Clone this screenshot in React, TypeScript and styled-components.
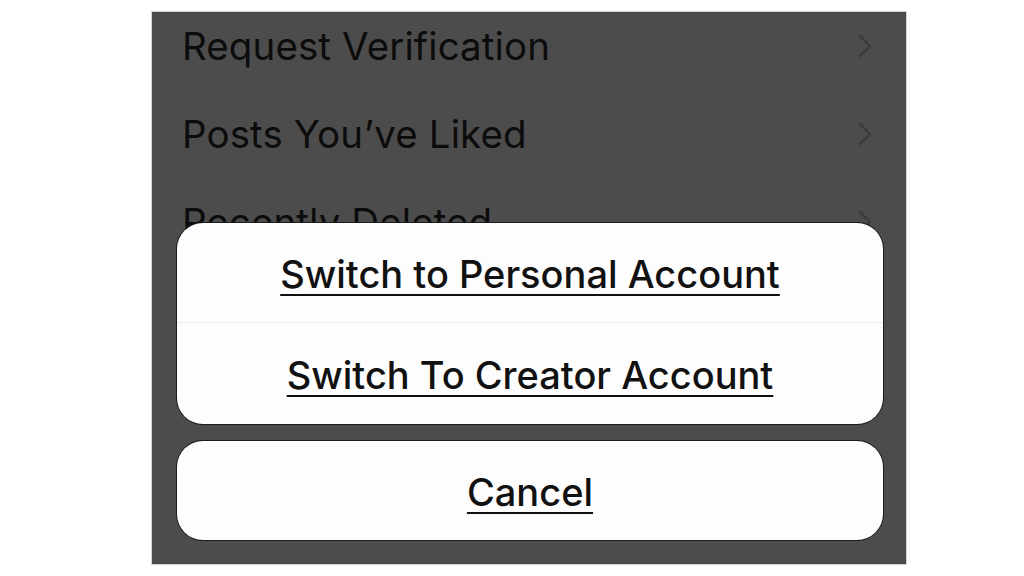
import React from "react";
import styled, { createGlobalStyle } from "styled-components";

const GlobalStyle = createGlobalStyle`
    html, body {
        margin: 0;
        padding: 0;
        background: #ffffff;
        font-family: Inter, "Liberation Sans", Arial, sans-serif;
    }
`;

const Page = styled.div`
    width: 1024px;
    height: 576px;
    padding: 12px 0 0 152px;
    box-sizing: border-box;
`;

const Screen = styled.div`
    position: relative;
    width: 754px;
    height: 552px;
    background: #4c4c4c;
    box-shadow: 0 0 0 1px #d4d4d4;
    overflow: hidden;
`;

const List = styled.div`
    display: flex;
    flex-direction: column;
    margin-top: -10px;
`;

const Row = styled.div`
    height: 88px;
    display: flex;
    align-items: center;
    justify-content: space-between;
    padding: 0 34px 0 30px;
`;

const RowLabel = styled.span`
    font-size: 38.5px;
    line-height: 88px;
    letter-spacing: 0.1px;
    color: #0c0c0c;
`;

const Sheet = styled.div`
    position: absolute;
    left: 25px;
    right: 23px;
    top: 211px;
    display: flex;
    flex-direction: column;
    gap: 17px;
`;

const Group = styled.div`
    background: #fdfdfd;
    border-radius: 26px;
    box-shadow: 0 0 0 1px #1c1c1c;
    display: flex;
    flex-direction: column;
    overflow: hidden;
`;

const Action = styled.div<{ $h: number; $divider?: boolean }>`
    height: ${(p) => p.$h}px;
    display: flex;
    align-items: center;
    justify-content: center;
    border-top: ${(p) => (p.$divider ? "1px solid #ececec" : "none")};
`;

const ActionText = styled.span`
    font-size: 38px;
    font-weight: 500;
    letter-spacing: 0px;
    color: #111111;
    text-decoration: underline;
    text-decoration-thickness: 2px;
    text-underline-offset: 6px;
    padding-top: 2px;
`;

const Chevron = () => (
    <svg width="14" height="24" viewBox="0 0 14 24" fill="none">
        <path d="M2 2 L12 12 L2 22" stroke="#3a3a3a" strokeWidth="2.2" strokeLinecap="round" strokeLinejoin="round" />
    </svg>
);

const rows = ["Request Verification", "Posts You\u2019ve Liked", "Recently Deleted"];

export default function App() {
    return (
        <Page>
            <GlobalStyle />
            <Screen>
                <List>
                    {rows.map((r) => (
                        <Row key={r}>
                            <RowLabel>{r}</RowLabel>
                            <Chevron />
                        </Row>
                    ))}
                </List>
                <Sheet>
                    <Group>
                        <Action $h={99}>
                            <ActionText>Switch to Personal Account</ActionText>
                        </Action>
                        <Action $h={101} $divider>
                            <ActionText>Switch To Creator Account</ActionText>
                        </Action>
                    </Group>
                    <Group>
                        <Action $h={99}>
                            <ActionText>Cancel</ActionText>
                        </Action>
                    </Group>
                </Sheet>
            </Screen>
        </Page>
    );
}
